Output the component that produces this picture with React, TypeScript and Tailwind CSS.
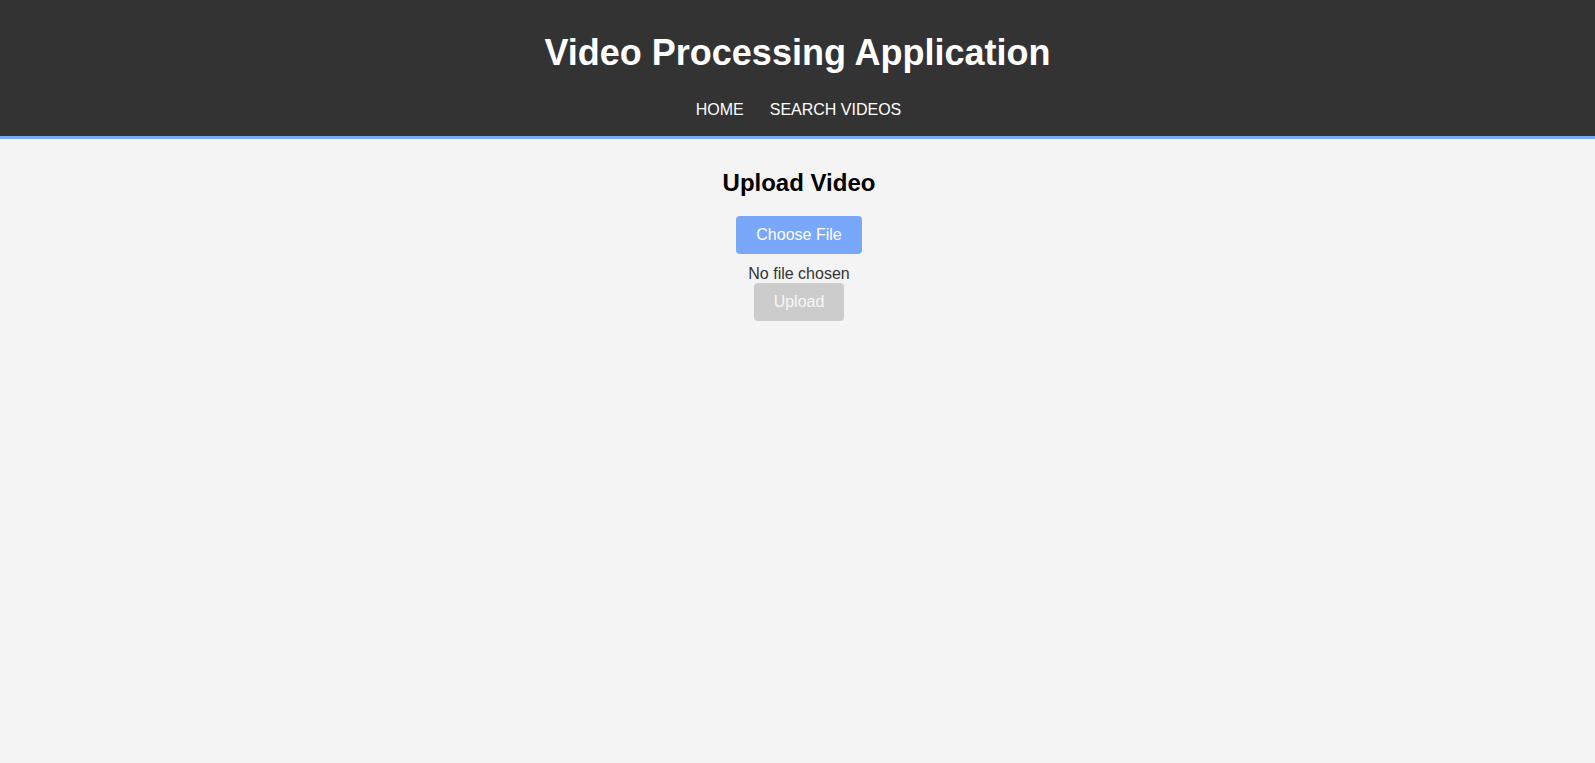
import React, { useState } from 'react';

const font = { fontFamily: '"Liberation Sans", Arial, sans-serif' };

function Header() {
  return (
    <header className="bg-[#333333] text-white border-b-[3px] border-[#79a8fb] pt-[32px] pb-[17px] flex flex-col items-center">
      <h1 className="text-[36px] leading-[42px] font-bold">Video Processing Application</h1>
      <nav className="mt-[27px] flex gap-[26px] pl-[2px] text-[16px] leading-[18px]">
        <a href="#" className="text-white">HOME</a>
        <a href="#" className="text-white">SEARCH VIDEOS</a>
      </nav>
    </header>
  );
}

function UploadForm() {
  const [file, setFile] = useState<File | null>(null);

  return (
    <section className="flex flex-col items-center pt-[30px] pl-[3px]">
      <h2 className="text-[24px] leading-[28px] font-bold text-black">Upload Video</h2>
      <label className="mt-[19px] h-[38px] px-5 py-[10px] rounded-[4px] bg-[#79a8fb] text-white text-[16px] leading-[18px] cursor-pointer">
        Choose File
        <input
          type="file"
          accept="video/*"
          className="hidden"
          onChange={(e) => setFile(e.target.files?.[0] ?? null)}
        />
      </label>
      <div className="mt-[11px] text-[16px] leading-[18px] text-[#333333]">
        {file ? file.name : 'No file chosen'}
      </div>
      <button
        disabled={!file}
        className="h-[38px] px-5 py-[10px] rounded-[4px] bg-[#cccccc] text-[#f7f7f7] text-[16px] leading-[18px]"
      >
        Upload
      </button>
    </section>
  );
}

export default function App() {
  return (
    <div className="min-h-screen bg-[#f4f4f4]" style={font}>
      <Header />
      <UploadForm />
    </div>
  );
}
